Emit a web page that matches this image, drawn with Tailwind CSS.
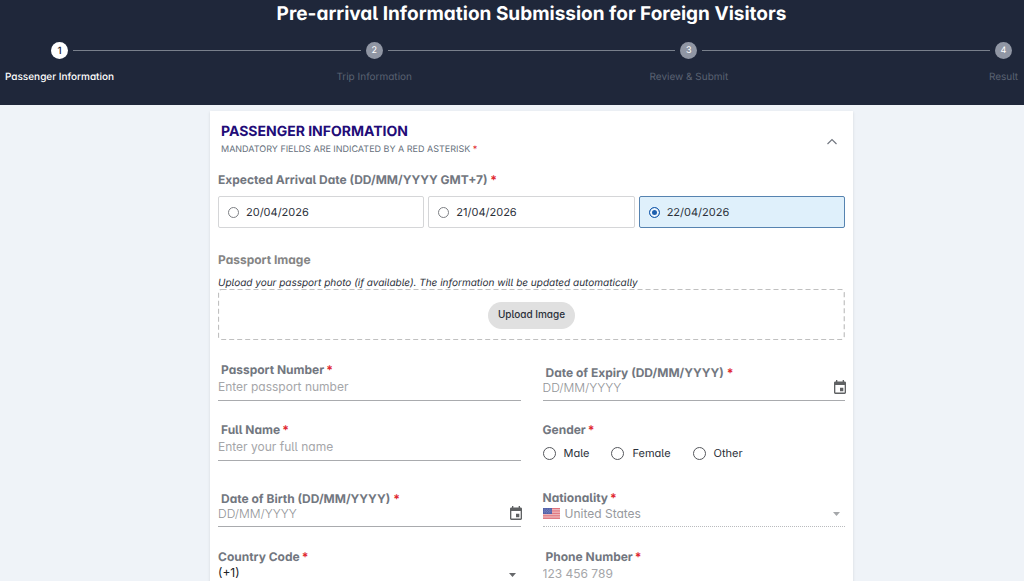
<!DOCTYPE html>
<html lang="en">
<head>
<meta charset="utf-8">
<meta name="viewport" content="width=device-width, initial-scale=1">
<title>Pre-arrival Information Submission</title>
<script src="https://cdn.jsdelivr.net/npm/@tailwindcss/browser@4"></script>
</head>
<body class="min-h-screen overflow-x-hidden bg-[#eff3f8] font-['Inter','Open_Sans',sans-serif] text-xs text-[#2b303a] [font-feature-settings:'cv11','cv05'] [text-rendering:geometricPrecision]">
<header class="bg-[#1f273a] pt-0.5 pb-5 text-white">
  <h1 class="pl-[39px] text-center text-[19px] leading-6 font-bold">Pre-arrival Information Submission for Foreign Visitors</h1>
  <ol class="mt-4 flex pr-3 pl-[51px]">
    <li class="flex w-[17px] flex-col items-center gap-[10px]" aria-current="step">
      <span class="flex size-[17px] shrink-0 items-center justify-center rounded-full bg-white text-[10px] leading-4 font-medium text-[#1f273a]">1</span>
      <span class="text-[10px] leading-4 font-medium whitespace-nowrap">Passenger Information</span>
    </li>
    <li class="mx-[5px] mt-2 h-px flex-1 bg-[#79808c]" role="presentation"></li>
    <li class="flex w-[17px] flex-col items-center gap-[10px]">
      <span class="flex size-[17px] shrink-0 items-center justify-center rounded-full bg-[#9096a4] text-[9px] leading-4">2</span>
      <span class="text-[10px] leading-4 whitespace-nowrap text-[#5a6272]">Trip Information</span>
    </li>
    <li class="mx-[5px] mt-2 h-px flex-1 bg-[#79808c]" role="presentation"></li>
    <li class="flex w-[17px] flex-col items-center gap-[10px]">
      <span class="flex size-[17px] shrink-0 items-center justify-center rounded-full bg-[#9096a4] text-[9px] leading-4">3</span>
      <span class="text-[10px] leading-4 whitespace-nowrap text-[#5a6272]">Review &amp; Submit</span>
    </li>
    <li class="mx-[5px] mt-2 h-px flex-1 bg-[#79808c]" role="presentation"></li>
    <li class="flex w-[17px] flex-col items-center gap-[10px]">
      <span class="flex size-[17px] shrink-0 items-center justify-center rounded-full bg-[#9096a4] text-[9px] leading-4">4</span>
      <span class="text-[10px] leading-4 whitespace-nowrap text-[#5a6272]">Result</span>
    </li>
  </ol>
</header>
<main class="pt-1.5 pl-[39px]">
  <form class="mx-auto w-full max-w-[643px] bg-white px-2 pb-4 shadow-sm">
    <div class="flex items-center justify-between pt-3 pr-[7px] pl-[3px]">
      <div>
        <h2 class="text-[14px] leading-[18px] font-bold text-[#220c78]">PASSENGER INFORMATION</h2>
        <p class="text-[9px] leading-[17px] text-[#66707c]">MANDATORY FIELDS ARE INDICATED BY A RED ASTERISK <span class="text-[#e0262e]">*</span></p>
      </div>
      <button type="button" aria-label="Collapse section" class="pt-0.5 text-[#727780]">
        <svg class="h-2 w-3" viewBox="0 0 12 8" fill="none" stroke="currentColor" stroke-width="1.2"><path d="M1.500 6 6 1.600 10.500 6"/></svg>
      </button>
    </div>

    <fieldset class="mt-[14px]">
      <legend class="text-xs leading-4 font-bold text-[#727780]">Expected Arrival Date (DD/MM/YYYY GMT+7) <span class="text-[#e0262e]">*</span></legend>
      <div class="mt-2 grid grid-cols-3 gap-1">
        <label class="flex h-8 items-center gap-[7px] rounded-[2px] border border-[#d5d6d8] px-[9px] text-[11px]"><input type="radio" name="arrival" class="size-[11px] appearance-none rounded-full border border-[#7d7f84]">20/04/2026</label>
        <label class="flex h-8 items-center gap-[7px] rounded-[2px] border border-[#d5d6d8] px-[9px] text-[11px]"><input type="radio" name="arrival" class="size-[11px] appearance-none rounded-full border border-[#7d7f84]">21/04/2026</label>
        <label class="flex h-8 items-center gap-[7px] rounded-[2px] border border-[#5683b0] bg-[#dff0fb] px-[9px] text-[11px]"><input type="radio" name="arrival" checked class="size-[11px] appearance-none rounded-full border border-[#1d5fae] bg-[#1d5fae] shadow-[inset_0_0_0_2px_#eef6fd]">22/04/2026</label>
      </div>
    </fieldset>

    <section class="mt-6">
      <h3 class="text-xs leading-4 font-bold text-[#858585]">Passport Image</h3>
      <p class="mt-2 text-[10px] leading-[14px] italic">Upload your passport photo (if available). The information will be updated automatically</p>
      <div class="relative -mt-px flex h-[52px] items-center justify-center">
        <svg class="absolute inset-0 h-full w-full" aria-hidden="true"><rect x=".5" y=".5" width="99.8%" height="50" rx="3" fill="none" stroke="#c0c0c0" stroke-width="1.200" stroke-dasharray="5 3"/></svg>
        <button type="button" class="relative h-[27px] rounded-full bg-[#e0e0e0] px-[10px] text-[10px] font-medium">Upload Image</button>
      </div>
    </section>

    <div class="mt-[21px] grid grid-cols-2 gap-x-[22px]">
      <div class="h-[60px]">
        <label for="passport" class="block pl-[3px] text-xs leading-4 font-bold text-[#727780]">Passport Number<span class="pl-0.5 text-[#e0262e]">*</span></label>
        <input id="passport" type="text" placeholder="Enter passport number" class="block h-[23px] w-full border-b border-[#a9abae] pb-1.5 text-xs outline-none placeholder:text-[#a5a6a9]">
      </div>
      <div class="h-[60px] pt-[3px]">
        <label for="expiry" class="block pl-[3px] text-xs leading-4 font-bold text-[#727780]">Date of Expiry (DD/MM/YYYY)<span class="pl-[3px] text-[#e0262e]">*</span></label>
        <div class="flex h-5 items-start border-b border-[#a9abae]">
          <input id="expiry" type="text" placeholder="DD/MM/YYYY" class="h-3 min-w-0 flex-1 text-xs leading-3 font-light outline-none placeholder:text-[#929497]">
          <button type="button" aria-label="Choose date of expiry" class="-mt-px -mr-px text-[#5f6163]"><svg class="h-[14px] w-3" viewBox="3 1 18 20" preserveAspectRatio="none" fill="currentColor"><path d="M17 12h-5v5h5v-5zM16 1v2H8V1H6v2H5c-1.100 0-2 .9-2 2v14c0 1.100.9 2 2 2h14c1.100 0 2-.9 2-2V5c0-1.100-.9-2-2-2h-1V1h-2zm3 18H5V8h14v11z"/></svg></button>
        </div>
      </div>
      <div class="h-[68px]">
        <label for="fullname" class="block pl-[3px] text-xs leading-4 font-bold text-[#727780]">Full Name<span class="pl-0.5 text-[#e0262e]">*</span></label>
        <input id="fullname" type="text" placeholder="Enter your full name" class="block h-[23px] w-full border-b border-[#a9abae] pb-1.5 text-xs outline-none placeholder:text-[#a5a6a9]">
      </div>
      <fieldset class="h-[68px] pt-px">
        <legend class="text-xs leading-4 font-bold text-[#727780]">Gender<span class="pl-0.5 text-[#e0262e]">*</span></legend>
        <div class="mt-1.5 flex gap-[22px] text-[11px] leading-4">
          <label class="flex items-center gap-2"><input type="radio" name="gender" class="size-[13px] appearance-none rounded-full border border-[#55575c]">Male</label>
          <label class="flex items-center gap-2"><input type="radio" name="gender" class="size-[13px] appearance-none rounded-full border border-[#55575c]">Female</label>
          <label class="flex items-center gap-2"><input type="radio" name="gender" class="size-[13px] appearance-none rounded-full border border-[#55575c]">Other</label>
        </div>
      </fieldset>
      <div class="h-[59px] pt-px">
        <label for="birth" class="block pl-[3px] text-xs leading-4 font-bold text-[#727780]">Date of Birth (DD/MM/YYYY)<span class="pl-[3px] text-[#e0262e]">*</span></label>
        <div class="flex h-5 items-start border-b border-[#a9abae]">
          <input id="birth" type="text" placeholder="DD/MM/YYYY" class="h-3 min-w-0 flex-1 text-xs leading-3 font-light outline-none placeholder:text-[#929497]">
          <button type="button" aria-label="Choose date of birth" class="-mt-px -mr-px text-[#5f6163]"><svg class="h-[14px] w-3" viewBox="3 1 18 20" preserveAspectRatio="none" fill="currentColor"><path d="M17 12h-5v5h5v-5zM16 1v2H8V1H6v2H5c-1.100 0-2 .9-2 2v14c0 1.100.9 2 2 2h14c1.100 0 2-.9 2-2V5c0-1.100-.9-2-2-2h-1V1h-2zm3 18H5V8h14v11z"/></svg></button>
        </div>
      </div>
      <div class="h-[59px]">
        <label for="nation" class="block text-xs leading-4 font-bold text-[#727780]">Nationality<span class="pl-0.5 text-[#e0262e]">*</span></label>
        <div class="flex h-[21px] items-start gap-[5px] border-b border-dotted border-[#b9bbbe] text-[#979a9e]">
          <svg class="mt-[2px] h-[11px] w-[17px]" viewBox="0 0 17 11" aria-hidden="true"><path fill="#f3d3d5" d="M0 0h17v11H0z"/><path stroke="#dc6670" stroke-width=".9" d="M0 .5h17M0 2.200h17M0 3.900h17M0 5.600h17M0 7.300h17M0 9h17M0 10.600h17"/><path fill="#5260a8" d="M0 0h9v6H0z"/><path stroke="#aab1dc" stroke-width=".6" stroke-dasharray=".7 1" d="M.8 1.200h8M1.500 2.400h7M.8 3.600h8M1.500 4.800h7"/></svg>
          <select id="nation" disabled class="h-4 min-w-0 flex-1 appearance-none text-xs leading-4 opacity-100"><option>United States</option></select>
          <svg class="mt-[6px] mr-[5px] h-1 w-[7px]" viewBox="0 0 7 4" fill="#a5a7aa" aria-hidden="true"><path d="M0 0h7L3.500 4z"/></svg>
        </div>
      </div>
      <div>
        <label for="code" class="block text-xs leading-4 font-bold text-[#727780]">Country Code<span class="pl-0.5 text-[#e0262e]">*</span></label>
        <div class="flex h-[22px] items-start border-b border-[#a9abae]">
          <select id="code" class="h-4 min-w-0 flex-1 appearance-none text-xs leading-4 text-[#202226]"><option>(+1)</option></select>
          <svg class="mt-2 mr-[5px] h-1 w-[7px]" viewBox="0 0 7 4" fill="#66686b" aria-hidden="true"><path d="M0 0h7L3.500 4z"/></svg>
        </div>
      </div>
      <div>
        <label for="phone" class="block pl-[3px] text-xs leading-4 font-bold text-[#727780]">Phone Number<span class="pl-0.5 text-[#e0262e]">*</span></label>
        <input id="phone" type="tel" placeholder="123 456 789" class="block h-[23px] w-full border-b border-[#a9abae] pb-1.5 text-xs outline-none placeholder:text-[#a5a6a9]">
      </div>
    </div>
  </form>
</main>
</body>
</html>
